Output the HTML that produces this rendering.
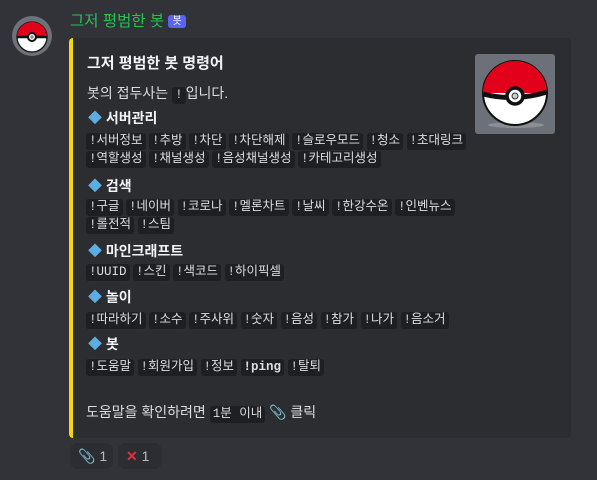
<!DOCTYPE html>
<html><head><meta charset="utf-8"><style>
*{margin:0;padding:0;box-sizing:border-box}
body{width:597px;height:480px;background:#313338;font-family:"Liberation Sans","Noto Sans CJK KR",sans-serif;color:#dbdee1;position:relative;overflow:hidden}
.a{position:absolute}
.embed{left:69px;top:38px;width:502px;height:400px;background:#2b2d31;border-left:4px solid #f5d60a;border-radius:4px}
.t{font-size:14px;line-height:18px;white-space:nowrap}
.h{font-weight:bold;color:#f2f3f5}
.row{font-size:12.5px;line-height:18px;white-space:nowrap}
code{display:inline-block;font-family:"Liberation Mono","Noto Sans CJK KR",monospace;background:#1e1f22;border-radius:3px;padding:0 3px;height:17px;line-height:17px;font-size:12.5px;color:#dbdee1}
.d{color:#5dade2}
.rx{top:443px;height:26px;background:#2b2d31;border-radius:8px;font-size:14px;color:#b5bac1;line-height:26px;padding-left:8px}
</style></head><body>
<svg class="a" style="left:12px;top:16px" width="40" height="40" viewBox="0 0 40 40"><circle cx="20" cy="20" r="20" fill="#6d7178"/><circle cx="20" cy="21" r="15" fill="#fff" stroke="#111" stroke-width="1.3"/><path d="M5 21a15 15 0 0 1 30 0z" fill="#e3001b"/><path d="M5 21h30" stroke="#111" stroke-width="2.5"/><circle cx="20" cy="21" r="4" fill="#fff" stroke="#111" stroke-width="2"/><circle cx="20" cy="21" r="1.7" fill="#888"/></svg>
<div class="a t" style="left:70px;top:13px;font-size:15.5px;color:#23c552">그저 평범한 봇 <span style="background:#5865f2;color:#fff;font-size:10px;padding:1px 4px;border-radius:3px;vertical-align:2px">봇</span></div>
<div class="a embed"></div>
<svg class="a" style="left:475px;top:54px" width="80" height="80" viewBox="0 0 80 80"><rect width="80" height="80" rx="3" fill="#6c7078"/><ellipse cx="41" cy="71" rx="28" ry="3" fill="#8a8e95"/><circle cx="40" cy="39" r="32" fill="#fff" stroke="#111" stroke-width="2"/><path d="M8 39a32 32 0 0 1 64 0z" fill="#e3001b"/><path d="M8 40q32 8 64-2" stroke="#111" stroke-width="5" fill="none"/><circle cx="40" cy="42" r="8" fill="#fff" stroke="#111" stroke-width="3.5"/><circle cx="40" cy="42" r="3" fill="#ccc" stroke="#333"/></svg>
<div class="a t h" style="left:87px;top:55px;font-size:15px">그저 평범한 봇 명령어</div>
<div class="a t" style="left:87px;top:84px">봇의 접두사는 <code>!</code>입니다.</div>
<div class="a t h" style="left:88px;top:109px"><span class="d">◆</span> 서버관리</div>
<div class="a row" style="left:86px;top:131px"><code>!서버정보</code> <code>!추방</code> <code>!차단</code> <code>!차단해제</code> <code>!슬로우모드</code> <code>!청소</code> <code>!초대링크</code></div>
<div class="a row" style="left:86px;top:149px"><code>!역할생성</code> <code>!채널생성</code> <code>!음성채널생성</code> <code>!카테고리생성</code></div>
<div class="a t h" style="left:88px;top:177px"><span class="d">◆</span> 검색</div>
<div class="a row" style="left:86px;top:197px"><code>!구글</code> <code>!네이버</code> <code>!코로나</code> <code>!멜론차트</code> <code>!날씨</code> <code>!한강수온</code> <code>!인벤뉴스</code></div>
<div class="a row" style="left:86px;top:215px"><code>!롤전적</code> <code>!스팀</code></div>
<div class="a t h" style="left:88px;top:242px"><span class="d">◆</span> 마인크래프트</div>
<div class="a row" style="left:86px;top:262px"><code>!UUID</code> <code>!스킨</code> <code>!색코드</code> <code>!하이픽셀</code></div>
<div class="a t h" style="left:88px;top:288px"><span class="d">◆</span> 놀이</div>
<div class="a row" style="left:86px;top:310px"><code>!따라하기</code> <code>!소수</code> <code>!주사위</code> <code>!숫자</code> <code>!음성</code> <code>!참가</code> <code>!나가</code> <code>!음소거</code></div>
<div class="a t h" style="left:88px;top:335px"><span class="d">◆</span> 봇</div>
<div class="a row" style="left:86px;top:357px"><code>!도움말</code> <code>!회원가입</code> <code>!정보</code> <code><b>!ping</b></code> <code>!탈퇴</code></div>
<div class="a t" style="left:86px;top:403px">도움말을 확인하려면 <code>1분 이내</code> 📎 클릭</div>
<div class="a rx" style="left:70px;width:43px">📎 1</div>
<div class="a rx" style="left:118px;width:44px"><span style="color:#e03040;font-weight:bold">✕</span> 1</div>
</body></html>
